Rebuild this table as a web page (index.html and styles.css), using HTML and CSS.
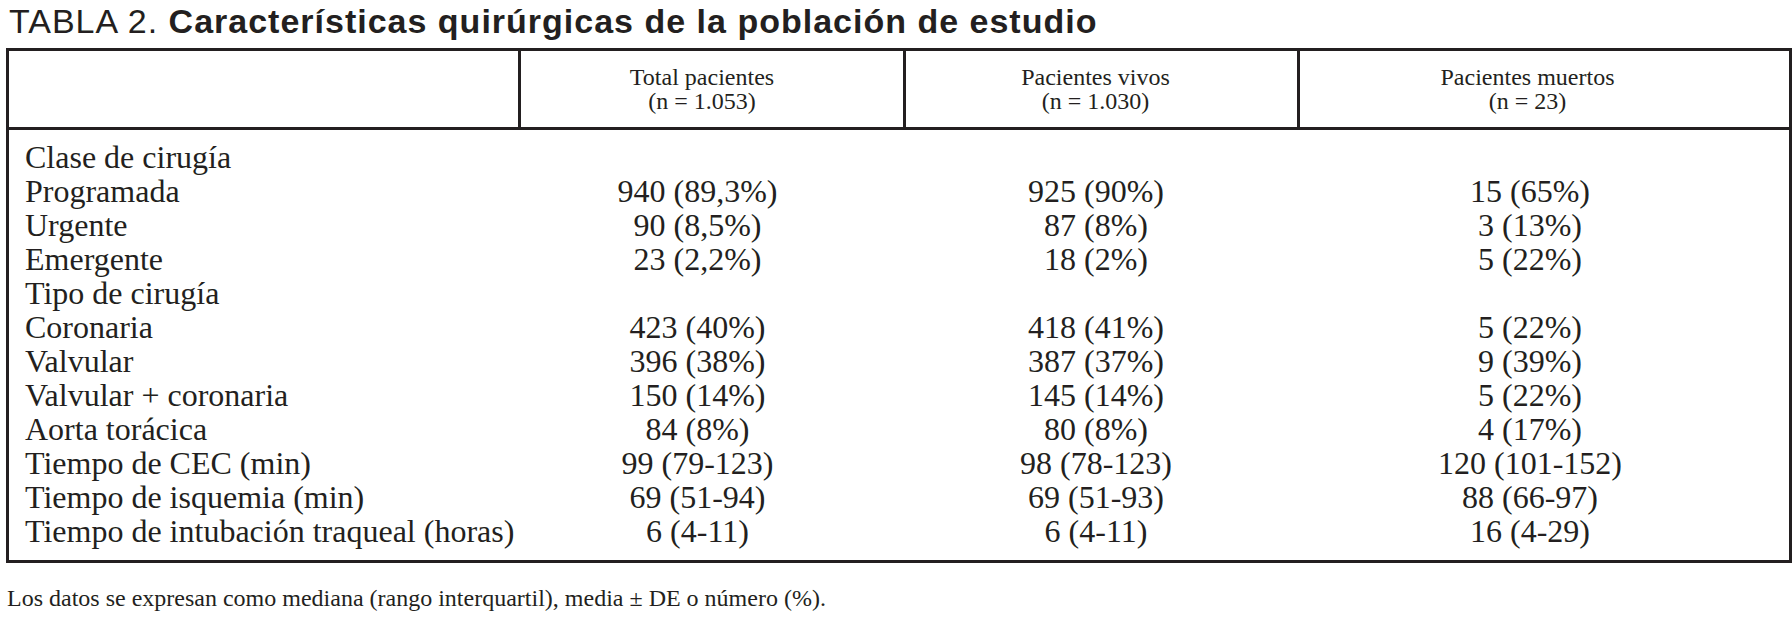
FILE: index.html
```html
<!DOCTYPE html>
<html lang="es">
<head>
<meta charset="utf-8">
<title>Tabla 2</title>
<link rel="stylesheet" href="styles.css">
</head>
<body>
<h1 class="title"><span class="title-num">TABLA 2.</span> <span class="title-text">Características quirúrgicas de la población de estudio</span></h1>
<table class="data">
  <colgroup>
    <col class="c-label">
    <col class="c-total">
    <col class="c-vivos">
    <col class="c-muertos">
  </colgroup>
  <thead>
    <tr>
      <th class="h-empty"></th>
      <th class="col-total">Total pacientes<br>(n = 1.053)</th>
      <th class="col-vivos">Pacientes vivos<br>(n = 1.030)</th>
      <th class="col-muertos">Pacientes muertos<br>(n = 23)</th>
    </tr>
  </thead>
  <tbody>
    <tr class="first"><td>Clase de cirugía</td><td></td><td></td><td></td></tr>
    <tr><td>Programada</td><td>940 (89,3%)</td><td>925 (90%)</td><td>15 (65%)</td></tr>
    <tr><td>Urgente</td><td>90 (8,5%)</td><td>87 (8%)</td><td>3 (13%)</td></tr>
    <tr><td>Emergente</td><td>23 (2,2%)</td><td>18 (2%)</td><td>5 (22%)</td></tr>
    <tr><td>Tipo de cirugía</td><td></td><td></td><td></td></tr>
    <tr><td>Coronaria</td><td>423 (40%)</td><td>418 (41%)</td><td>5 (22%)</td></tr>
    <tr><td>Valvular</td><td>396 (38%)</td><td>387 (37%)</td><td>9 (39%)</td></tr>
    <tr><td>Valvular + coronaria</td><td>150 (14%)</td><td>145 (14%)</td><td>5 (22%)</td></tr>
    <tr><td>Aorta torácica</td><td>84 (8%)</td><td>80 (8%)</td><td>4 (17%)</td></tr>
    <tr><td>Tiempo de CEC (min)</td><td>99 (79-123)</td><td>98 (78-123)</td><td>120 (101-152)</td></tr>
    <tr><td>Tiempo de isquemia (min)</td><td>69 (51-94)</td><td>69 (51-93)</td><td>88 (66-97)</td></tr>
    <tr class="last"><td>Tiempo de intubación traqueal (horas)</td><td>6 (4-11)</td><td>6 (4-11)</td><td>16 (4-29)</td></tr>
  </tbody>
</table>
<p class="note">Los datos se expresan como mediana (rango interquartil), media ± DE o número (%).</p>
</body>
</html>
```

FILE: styles.css
```css
html, body {
  margin: 0;
  padding: 0;
  background: #ffffff;
  color: #231f20;
}

.title {
  margin: 0 0 9px 9px;
  padding-top: 3px;
  height: 36px;
  font-family: "Liberation Sans", Arial, sans-serif;
  font-size: 34px;
  letter-spacing: 1px;
  line-height: 36px;
  font-weight: normal;
  white-space: nowrap;
}

.title-text {
  font-weight: bold;
}

.data {
  margin-left: 6px;
  width: 1780px;
  table-layout: fixed;
  border-collapse: separate;
  border-spacing: 0;
  border: 3px solid #231f20;
  font-family: "Liberation Serif", "Times New Roman", serif;
}

.c-label { width: 509px; }
.c-total { width: 385px; }
.c-vivos { width: 394px; }
.c-muertos { width: 492px; }

.data th {
  font-weight: normal;
  font-size: 24px;
  line-height: 24px;
  padding: 14px 8px 14px 0;
  height: 48px;
  text-align: center;
  vertical-align: middle;
  border-left: 3px solid #231f20;
  border-bottom: 3px solid #231f20;
}

.data th.h-empty {
  border-left: 0;
}

.data th.col-total { padding-right: 20px; }
.data th.col-vivos { padding-right: 12px; }
.data th.col-muertos { padding-right: 34px; }

.data td {
  font-size: 32px;
  line-height: 34px;
  padding: 0 8px 0 0;
  text-align: center;
  white-space: nowrap;
}

.data td:first-child {
  text-align: left;
  padding-left: 16px;
}

.data td:nth-child(2) { padding-right: 26px; }
.data td:nth-child(3) { padding-right: 8px; }
.data td:nth-child(4) { padding-right: 26px; }

.data tr.first td {
  padding-top: 10px;
}

.data tr.last td {
  padding-bottom: 12px;
}

.note {
  margin: 22px 0 0 7px;
  font-family: "Liberation Serif", "Times New Roman", serif;
  font-size: 24px;
  line-height: 27px;
}
```
